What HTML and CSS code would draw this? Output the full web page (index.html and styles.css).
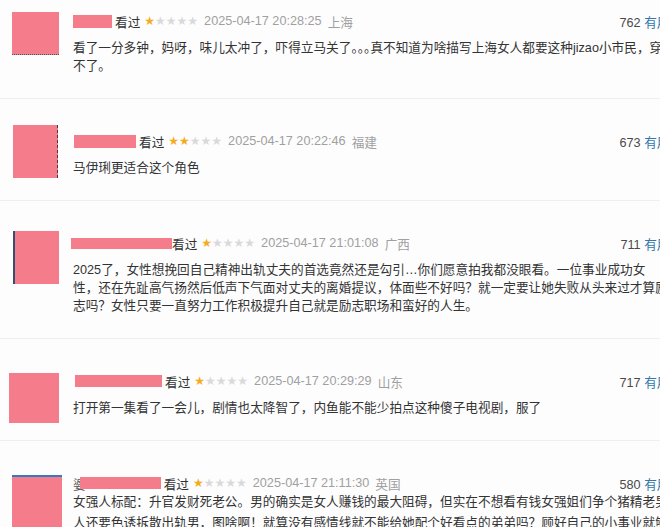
FILE: index.html
```html
<!DOCTYPE html>
<html lang="zh-CN">
<head>
  <meta charset="UTF-8">
  <meta name="viewport" content="width=device-width, initial-scale=1.0">
  <title>短评</title>
  <link rel="stylesheet" href="styles.css">
</head>
<body>
  <div class="list">
    <div class="item">
      <div class="side"><div class="avatar av-1"></div></div>
      <div class="main">
        <div class="head">
          <span class="name nm-1"></span>
          <span class="status">看过</span>
          <span class="stars"><span class="on">★</span>★★★★</span>
          <span class="time">2025-04-17 20:28:25</span>
          <span class="loc">上海</span>
          <span class="votes">762 <a href="#">有用</a></span>
        </div>
        <p class="text">看了一分多钟，妈呀，味儿太冲了，吓得立马关了<span class="half">。。。</span>真不知道为啥描写上海女人都要这种jizao小市民，穿不了。</p>
      </div>
    </div>

    <div class="item">
      <div class="side"><div class="avatar av-2"></div></div>
      <div class="main">
        <div class="head">
          <span class="name nm-2"></span>
          <span class="status">看过</span>
          <span class="stars"><span class="on">★★</span>★★★</span>
          <span class="time">2025-04-17 20:22:46</span>
          <span class="loc">福建</span>
          <span class="votes">673 <a href="#">有用</a></span>
        </div>
        <p class="text">马伊琍更适合这个角色</p>
      </div>
    </div>

    <div class="item">
      <div class="side"><div class="avatar av-3"></div></div>
      <div class="main">
        <div class="head">
          <span class="name nm-3"></span>
          <span class="status">看过</span>
          <span class="stars"><span class="on">★</span>★★★★</span>
          <span class="time">2025-04-17 21:01:08</span>
          <span class="loc">广西</span>
          <span class="votes">711 <a href="#">有用</a></span>
        </div>
        <p class="text">2025了，女性想挽回自己精神出轨丈夫的首选竟然还是勾引…你们愿意拍我都没眼看。一位事业成功女性，还在先趾高气扬然后低声下气面对丈夫的离婚提议，体面些不好吗？就一定要让她失败从头来过才算励志吗？女性只要一直努力工作积极提升自己就是励志职场和蛮好的人生。</p>
      </div>
    </div>

    <div class="item">
      <div class="side"><div class="avatar av-4"></div></div>
      <div class="main">
        <div class="head">
          <span class="name nm-4"></span>
          <span class="status">看过</span>
          <span class="stars"><span class="on">★</span>★★★★</span>
          <span class="time">2025-04-17 20:29:29</span>
          <span class="loc">山东</span>
          <span class="votes">717 <a href="#">有用</a></span>
        </div>
        <p class="text">打开第一集看了一会儿，剧情也太降智了，内鱼能不能少拍点这种傻子电视剧，服了</p>
      </div>
    </div>

    <div class="item item-last">
      <div class="side"><div class="avatar av-5"></div></div>
      <div class="main">
        <div class="head">
          <span class="lead">婆</span><span class="name nm-5"></span>
          <span class="status">看过</span>
          <span class="stars"><span class="on">★</span>★★★★</span>
          <span class="time">2025-04-17 21:11:30</span>
          <span class="loc">英国</span>
          <span class="votes">580 <a href="#">有用</a></span>
        </div>
        <p class="text">女强人标配：升官发财死老公。男的确实是女人赚钱的最大阻碍，但实在不想看有钱女强姐们争个猪精老男人还要色诱拆散出轨男，图啥啊！就算没有感情线就不能给她配个好看点的弟弟吗？顾好自己的小事业就够了吧</p>
      </div>
    </div>
  </div>
</body>
</html>
```

FILE: styles.css
```css
html, body {
  overflow: hidden;
}
body {
  margin: 0;
  background-color: #fdfdfe;
  font-family: "Liberation Sans", "Noto Sans CJK SC", sans-serif;
  font-size: 12.67px;
  color: #333333;
}
.list {
  width: 669.5px;
}
.item {
  display: flex;
  padding: 33px 0 23px;
  border-bottom: 1px solid #efeff2;
}
.item:first-child {
  padding-top: 12px;
}
.side {
  width: 73px;
  flex-shrink: 0;
}
.avatar {
  background-color: #f57d8b;
  margin-bottom: -30px;
}
.av-1 {
  width: 47px;
  height: 42px;
  margin-left: 12px;
  border-bottom: 1px dotted #555555;
}
.av-2 {
  width: 44px;
  height: 53px;
  margin-top: -7px;
  margin-left: 13px;
  border-right: 1px dashed #4a3a40;
}
.av-3 {
  width: 44px;
  height: 53px;
  margin-top: -3px;
  margin-left: 13px;
  border-left: 2px solid #34506e;
}
.av-4 {
  width: 50px;
  height: 50px;
  margin-top: 1px;
  margin-left: 9px;
}
.av-5 {
  width: 50px;
  height: 52px;
  margin-top: 1px;
  margin-left: 12px;
  border-top: 2px solid #3b78c4;
}
.main {
  flex: 1;
  min-width: 0;
}
.head {
  display: flex;
  align-items: center;
  height: 18px;
  white-space: nowrap;
}
.name {
  display: inline-block;
  background-color: #f57d8b;
}
.nm-1 {
  width: 39px;
  height: 13px;
}
.nm-2 {
  width: 62px;
  height: 13px;
  margin-left: 1px;
}
.nm-3 {
  width: 101px;
  height: 11px;
  margin-left: -2px;
}
.nm-4 {
  width: 87px;
  height: 12px;
  margin-left: 2px;
}
.nm-5 {
  width: 81px;
  height: 12px;
  margin-left: -6px;
}
.lead {
  color: #555555;
}
.status {
  margin-left: 3px;
  color: #333333;
}
.nm-3 + .status {
  margin-left: 0;
}
.stars {
  margin-left: 4px;
  font-family: "DejaVu Sans", sans-serif;
  font-size: 12px;
  color: #d9d9d9;
}
.stars .on {
  color: #f4ac1c;
}
.time {
  margin-left: 6px;
  color: #a0a0a0;
}
.loc {
  margin-left: 6px;
  color: #a0a0a0;
}
.votes {
  margin-left: auto;
  color: #494949;
}
.votes a {
  color: #3377aa;
  text-decoration: none;
}
.text {
  margin: 9px 0 0;
  line-height: 18px;
}
.item-last .text {
  margin-top: 0;
  line-height: 21px;
}
.half {
  font-feature-settings: "halt";
}
```
